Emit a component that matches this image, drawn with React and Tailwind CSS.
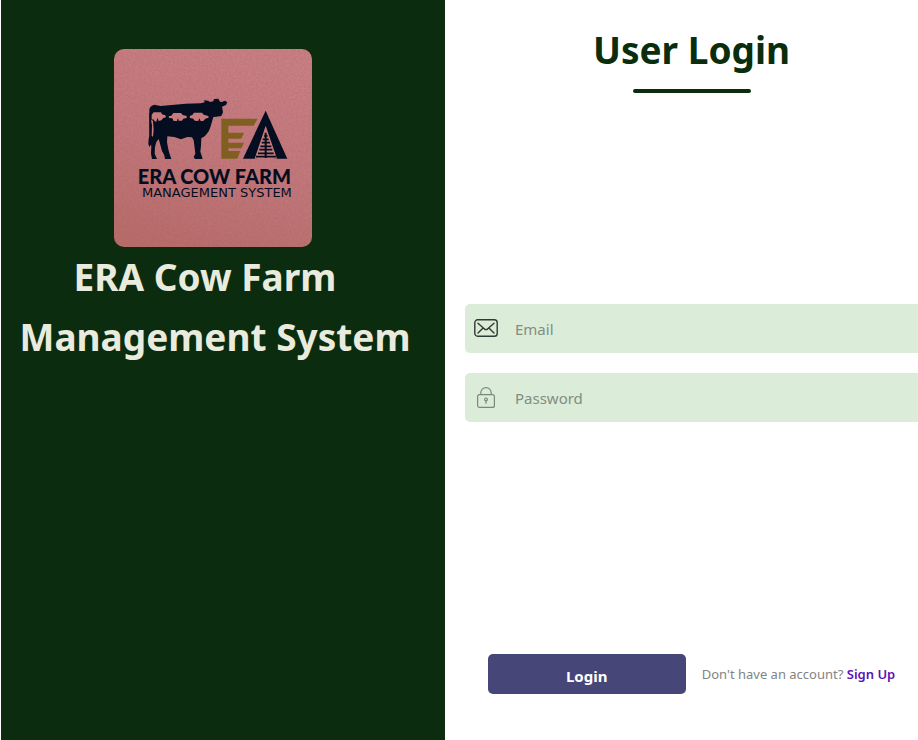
function Logo() {
  return (
    <svg viewBox="30 27 594 594" role="img" aria-label="ERA Cow Farm logo" className="size-[198px] rounded-[10px]">
      <defs>
        <linearGradient id="card" x1="0.6" y1="0" x2="0.3" y2="1">
          <stop offset="0" stopColor="#c97f84" />
          <stop offset="0.5" stopColor="#c3787b" />
          <stop offset="1" stopColor="#b96d6b" />
        </linearGradient>
        <filter id="grain" x="0" y="0" width="100%" height="100%">
          <feTurbulence type="fractalNoise" baseFrequency="0.16" numOctaves="2" seed="4" />
          <feColorMatrix values="0 0 0 0 0.3  0 0 0 0 0.1  0 0 0 0 0.12  1.2 0 0 0 -0.4" />
        </filter>
      </defs>
      <rect x="30" y="27" width="594" height="594" fill="url(#card)" />
      <rect x="30" y="27" width="594" height="594" filter="url(#grain)" opacity="0.35" />
      <g fill="#050d20">
        <path d="M136 208Q138 197 151 194L170 198L245 191L290 190L302 187L300 181L313 182L317 186L328 184L330 177L343 176L348 185L353 186L363 182L370 187L366 195L354 200L357 217L352 228L337 230L328 231L320 259Q314 280 299 291L292 294L291 318L289 335L294 350L296 357L273 357L269 351L274 341L272 324L269 301L264 292L250 291L231 298L211 291L190 289L189 306L192 323L195 336L202 357L183 357L181 346L174 333L166 304L164 297L157 306L153 321L152 341L159 357L144 357L141 341L142 316L139 316L137 322L133 313L134 296L137 285Z" />
        <path d="M485 212L550 356H509L485 264L458 356H417Z" />
      </g>
      <g fill="#c77b7c">
        <path d="M143 224L149 217H171L174 223L184 226L186 232L178 234L172 241L164 243L160 233L157 245L152 244L148 238L143 239Z" />
        <path d="M194 229L202 227L208 219H231L236 225L248 228V234L238 236L234 242H224L222 234L219 243H209L205 235L195 234Z" />
        <path d="M257 228L265 225L270 218H294L299 224L313 228L314 233L304 236L298 243H290L286 235L283 243L272 242L268 236L258 234Z" />
        <path d="M141 240L144 256L143 288L147 290L149 270L147 242Z" />
        <path d="M485 257L519 356H452Z" />
      </g>
      <g stroke="#050d20" fill="none">
        <path d="M485 278V354" strokeWidth="6" />
        <path d="M480 288H491M476 298H494M473 308H498M469 319H502M466 329H505M462 340H509M456 350H516" strokeWidth="5" />
        <path d="M138 218V300" strokeWidth="4" />
      </g>
      <path fill="#806020" d="M352 236H461L449 257H373V278H420L412 296H373V308H420L412 325H373V333H409L400 356H352Z" />
      <text x="101" y="431" className="fill-[#050d20] font-['Lato',sans-serif] text-[60px] font-black">ERA COW FARM</text>
      <text x="114" y="472" className="fill-[#050d20] font-['DejaVu_Sans',sans-serif] text-[39px]">MANAGEMENT SYSTEM</text>
    </svg>
  );
}

function MailIcon() {
  return (
    <svg viewBox="0 0 24 18" fill="none" stroke="#303b31" strokeWidth="1.4" strokeLinecap="round" strokeLinejoin="round" className="w-6" aria-hidden="true">
      <rect x="0.8" y="0.8" width="22.4" height="16.4" rx="2.8" />
      <path d="M4 4.2L10.2 9.7Q12 11.6 13.8 9.7L20 4.2M4 14L8.6 9.5M20 14L15.4 9.5" />
    </svg>
  );
}

function LockIcon() {
  return (
    <svg viewBox="0 0 18 21" fill="none" stroke="#7b897b" strokeWidth="1.2" className="w-[18px]" aria-hidden="true">
      <rect x="0.6" y="7.6" width="16.8" height="12.8" rx="2" />
      <path d="M3.8 7.6V5.8A5.2 5.2 0 0 1 14.2 5.8V7.6" />
      <circle cx="9" cy="12.4" r="1.4" />
      <path d="M9 13.8V16.2" strokeLinecap="round" />
    </svg>
  );
}

function Field({ id, type, label, icon }) {
  return (
    <div className="flex h-[49px] items-center rounded-l-[5px] bg-[#dbecd9]">
      <label htmlFor={id} aria-label={label} className="flex w-[42px] shrink-0 justify-center">
        {icon}
      </label>
      <input id={id} type={type} placeholder={label} className="h-full min-w-0 flex-1 bg-transparent pt-[2px] pl-2 text-[15px] text-[#333] outline-none placeholder:text-[#838d83]" />
    </div>
  );
}

export default function App() {
  return (
    <main className="grid min-h-screen grid-cols-[445fr_473fr] bg-white font-['Noto_Sans','Open_Sans',sans-serif]">
      <section className="ml-px flex flex-col items-center bg-[#0b2c0e] pt-[49px] pr-5">
        <Logo />
        <h1 className="text-center text-[37px] leading-[60px] font-bold whitespace-nowrap text-[#e8ebdd]">
          <span className="block pr-4">ERA Cow Farm</span>
          <span className="block pl-1">Management System</span>
        </h1>
      </section>
      <form className="flex flex-col justify-between pt-[22px] pb-[46px] pl-5" onSubmit={(e) => e.preventDefault()}>
        <header className="flex flex-col items-center gap-[11px]">
          <h2 className="text-[37px] leading-14 font-bold text-[#0a2d0e]">User Login</h2>
          <div className="h-1 w-[118px] rounded-full bg-[#0a2d0e]" />
        </header>
        <div className="flex flex-col gap-5 pb-[22px]">
          <Field id="email" type="email" label="Email" icon={<MailIcon />} />
          <Field id="password" type="password" label="Password" icon={<LockIcon />} />
        </div>
        <div className="flex items-center justify-center gap-4">
          <button type="submit" className="h-10 w-[198px] rounded-[5px] bg-[#474678] pt-1 text-[15px] font-bold text-white">
            Login
          </button>
          <p className="pt-[2px] text-[13px] whitespace-nowrap text-[#838383]">
            Don't have an account?{" "}
            <a href="#signup" className="font-semibold text-[#5b11b5]">Sign Up</a>
          </p>
        </div>
      </form>
    </main>
  );
}
